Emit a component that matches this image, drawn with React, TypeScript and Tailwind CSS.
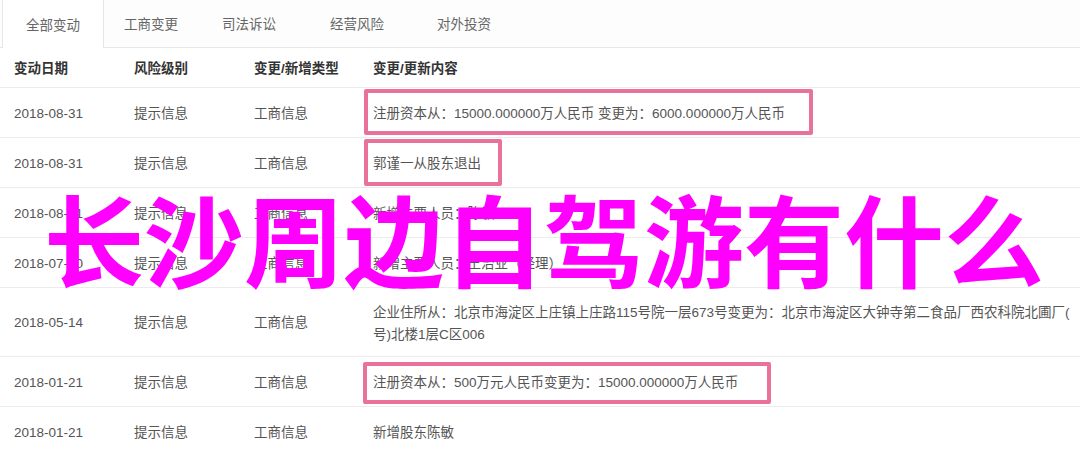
import React from "react";

const FONT = { fontFamily: '"Liberation Sans", "Noto Sans CJK SC", sans-serif' };

type Row = {
  date: string;
  level: string;
  type: string;
  content: React.ReactNode;
  h: string;
  box?: string;
};

const rows: Row[] = [
  {
    date: "2018-08-31",
    level: "提示信息",
    type: "工商信息",
    content: "注册资本从：15000.000000万人民币 变更为：6000.000000万人民币",
    h: "h-[50px]",
    box: "left-[4px] top-[1px] w-[449px] h-[46px]",
  },
  {
    date: "2018-08-31",
    level: "提示信息",
    type: "工商信息",
    content: "郭谨一从股东退出",
    h: "h-[50px]",
    box: "left-[4px] top-[1px] w-[138px] h-[47px]",
  },
  {
    date: "2018-08-31",
    level: "提示信息",
    type: "工商信息",
    content: "新增主要人员：陈敏",
    h: "h-[50px]",
  },
  {
    date: "2018-07-10",
    level: "提示信息",
    type: "工商信息",
    content: "新增主要人员：王治业（经理）",
    h: "h-[50px]",
  },
  {
    date: "2018-05-14",
    level: "提示信息",
    type: "工商信息",
    content: (
      <div className="flex flex-col gap-[3px] leading-[19px]">
        <span className="whitespace-nowrap">
          企业住所从：北京市海淀区上庄镇上庄路115号院一层673号变更为：北京市海淀区大钟寺第二食品厂西农科院北圃厂(
        </span>
        <span className="whitespace-nowrap">号)北楼1层C区006</span>
      </div>
    ),
    h: "h-[69px]",
  },
  {
    date: "2018-01-21",
    level: "提示信息",
    type: "工商信息",
    content: "注册资本从：500万元人民币变更为：15000.000000万人民币",
    h: "h-[50px]",
    box: "left-[3px] top-[5px] w-[408px] h-[42px]",
  },
  {
    date: "2018-01-21",
    level: "提示信息",
    type: "工商信息",
    content: "新增股东陈敏",
    h: "h-[50px]",
  },
];

const tabs = [
  { label: "全部变动", w: "w-[102px]", active: true },
  { label: "工商变更", w: "w-[94px]" },
  { label: "司法诉讼", w: "w-[102px]" },
  { label: "经营风险", w: "w-[114px]" },
  { label: "对外投资", w: "w-[100px]" },
];

export default function App() {
  return (
    <div className="relative w-[1080px] h-[456px] overflow-hidden bg-white" style={FONT}>
      {/* Tabs */}
      <div className="flex h-[48px] border-b border-[#e6e6e6] bg-[#fdfdfd] pl-[2px]">
        {tabs.map((t) => (
          <div
            key={t.label}
            className={
              t.active
                ? `${t.w} flex items-center justify-center pt-[4px] bg-white border-l border-r border-[#e6e6e6] -mb-px text-[13.5px] text-[#666]`
                : `${t.w} flex items-center justify-center pt-[4px] text-[13.5px] text-[#666]`
            }
          >
            {t.label}
          </div>
        ))}
      </div>

      {/* Header */}
      <div className="grid grid-cols-[120px_120px_120px_1fr] h-[40px] items-center pt-[3px] border-b border-[#ececec] text-[13.5px] font-bold text-[#333]">
        <div className="pl-[14px]">变动日期</div>
        <div className="pl-[14px]">风险级别</div>
        <div className="pl-[14px]">变更/新增类型</div>
        <div className="pl-[13px]">变更/更新内容</div>
      </div>

      {/* Rows */}
      {rows.map((r, i) => (
        <div
          key={i}
          className={`grid grid-cols-[120px_120px_120px_1fr] ${r.h} items-center border-b border-[#ececec] text-[13.5px] text-[#555]`}
        >
          <div className="pl-[14px] pt-[3px]">{r.date}</div>
          <div className="pl-[14px] pt-[3px]">{r.level}</div>
          <div className="pl-[14px] pt-[3px]">{r.type}</div>
          <div className="relative h-full flex items-center pl-[13px] pt-[3px] overflow-hidden">
            {r.content}
            {r.box && (
              <div
                className={`absolute ${r.box} border-[4px] border-[#e8729a] rounded-[2px]`}
              />
            )}
          </div>
        </div>
      ))}

      {/* Overlay title */}
      <div
        className="absolute left-[44px] top-[182px] text-[100px] leading-[110px] font-bold text-[#ff00ff] whitespace-nowrap"
        style={{ fontFamily: '"Noto Sans CJK SC", sans-serif' }}
      >
        长沙周边自驾游有什么
      </div>
    </div>
  );
}
